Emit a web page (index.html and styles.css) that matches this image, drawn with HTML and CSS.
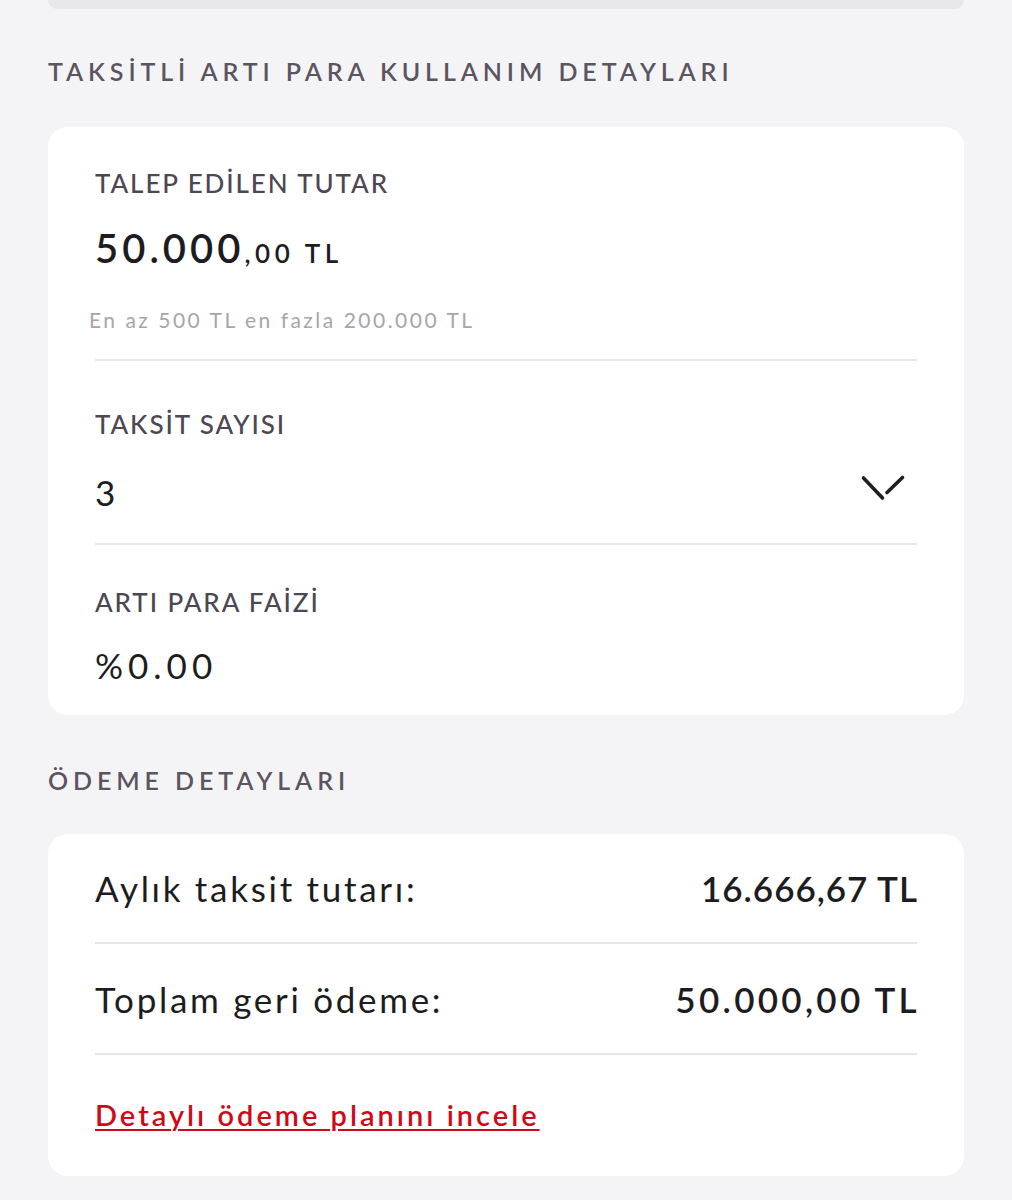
FILE: index.html
```html
<!DOCTYPE html>
<html lang="tr">
<head>
  <meta charset="UTF-8" />
  <meta name="viewport" content="width=device-width, initial-scale=1" />
  <title>Taksitli Artı Para</title>
  <link rel="stylesheet" href="styles.css">
</head>
<body>

  <!-- bottom edge of the previous card -->
  <div class="prev-card"></div>

  <h2 class="section-title">TAKSİTLİ ARTI PARA KULLANIM DETAYLARI</h2>

  <section class="card usage">
    <div class="field field-amount">
      <div class="label">TALEP EDİLEN TUTAR</div>
      <div class="amount">50.000<span class="cents">,00 TL</span></div>
      <div class="hint">En az 500 TL en fazla 200.000 TL</div>
    </div>

    <div class="field field-count">
      <div class="label">TAKSİT SAYISI</div>
      <div class="value select">
        <span>3</span>
        <svg class="chevron" width="46" height="32" viewBox="0 0 46 32" aria-hidden="true">
          <line x1="3.5" y1="4" x2="22.5" y2="24" />
          <line x1="27" y1="18.5" x2="42.5" y2="3.5" />
        </svg>
      </div>
    </div>

    <div class="field field-rate">
      <div class="label">ARTI PARA FAİZİ</div>
      <div class="value rate">%0.00</div>
    </div>
  </section>

  <h2 class="section-title payment-title">ÖDEME DETAYLARI</h2>

  <section class="card payment">
    <div class="row">
      <span>Aylık taksit tutarı:</span>
      <strong>16.666,67 TL</strong>
    </div>
    <div class="row row-second">
      <span>Toplam geri ödeme:</span>
      <strong class="wide">50.000,00 TL</strong>
    </div>
    <a class="plan-link" href="#">Detaylı ödeme planını incele</a>
  </section>

</body>
</html>
```
FILE: styles.css
```css
/* Base */
*, *::before, *::after {
  box-sizing: border-box;
}
body {
  margin: 0;
  background: #f4f4f6;
  font-family: Lato, "Noto Sans", sans-serif;
  color: #1d1d21;
}

/* Previous card edge */
.prev-card {
  height: 9px;
  margin: 0 48px;
  background: #e8e8ec;
  border-radius: 0 0 18px 18px;
}

/* Section titles */
.section-title {
  margin: 47px 48px 41px;
  font-size: 25px;
  line-height: 30px;
  font-weight: 600;
  letter-spacing: 4.9px;
  color: #5a5560;
  white-space: nowrap;
}
.payment-title {
  margin-top: 50px;
  margin-bottom: 39px;
}

/* Cards */
.card {
  margin: 0 48px;
  background: #fff;
  border-radius: 20px;
  padding: 0 47px;
}

/* Usage fields */
.label {
  font-size: 26px;
  line-height: 30px;
  font-weight: 500;
  letter-spacing: 1.9px;
  color: #4c4752;
}
.value {
  font-size: 35px;
  line-height: 40px;
  letter-spacing: 2.6px;
  color: #1d1d21;
}
.value.rate {
  letter-spacing: 5px;
}
.field {
  border-bottom: 2px solid #e6e6ea;
}
.field:last-child {
  border-bottom: none;
}
.field-amount {
  padding: 41px 0 26px;
}
.amount {
  margin-top: 26px;
  font-size: 40px;
  line-height: 48px;
  font-weight: 600;
  letter-spacing: 4px;
  color: #1d1d21;
}
.amount .cents {
  font-size: 26px;
  line-height: 1;
  letter-spacing: 4.6px;
}
.hint {
  margin: 35px 0 0 -6px;
  font-size: 21px;
  line-height: 26px;
  letter-spacing: 2.5px;
  color: #a9a3ae;
}
.field-count {
  padding: 48px 0 31px;
}
.field-count .value {
  margin-top: 33px;
}
.select {
  display: flex;
  justify-content: space-between;
  align-items: center;
}
.chevron {
  margin: 0 11px 4px 0;
  stroke: #1f1f22;
  stroke-width: 3.6;
  stroke-linecap: round;
}
.field-rate {
  padding: 42px 0 30px;
}
.field-rate .value {
  margin-top: 28px;
}

/* Payment rows */
.payment {
  padding-top: 34px;
  padding-bottom: 44px;
}
.row {
  display: flex;
  justify-content: space-between;
  align-items: baseline;
  font-size: 35px;
  line-height: 40px;
  letter-spacing: 2.7px;
  padding-bottom: 34px;
  border-bottom: 2px solid #e6e6ea;
}
.row-second {
  padding-top: 35px;
}
.row strong {
  font-weight: 600;
  letter-spacing: 1px;
  margin-right: -1px;
}
.row strong.wide {
  letter-spacing: 3.3px;
  margin-right: -3px;
}
.plan-link {
  display: inline-block;
  margin-top: 43px;
  font-size: 29px;
  line-height: 34px;
  font-weight: 600;
  letter-spacing: 3px;
  color: #cf0a17;
  text-decoration: underline;
  text-decoration-thickness: 2px;
  text-underline-offset: 3px;
}
```
